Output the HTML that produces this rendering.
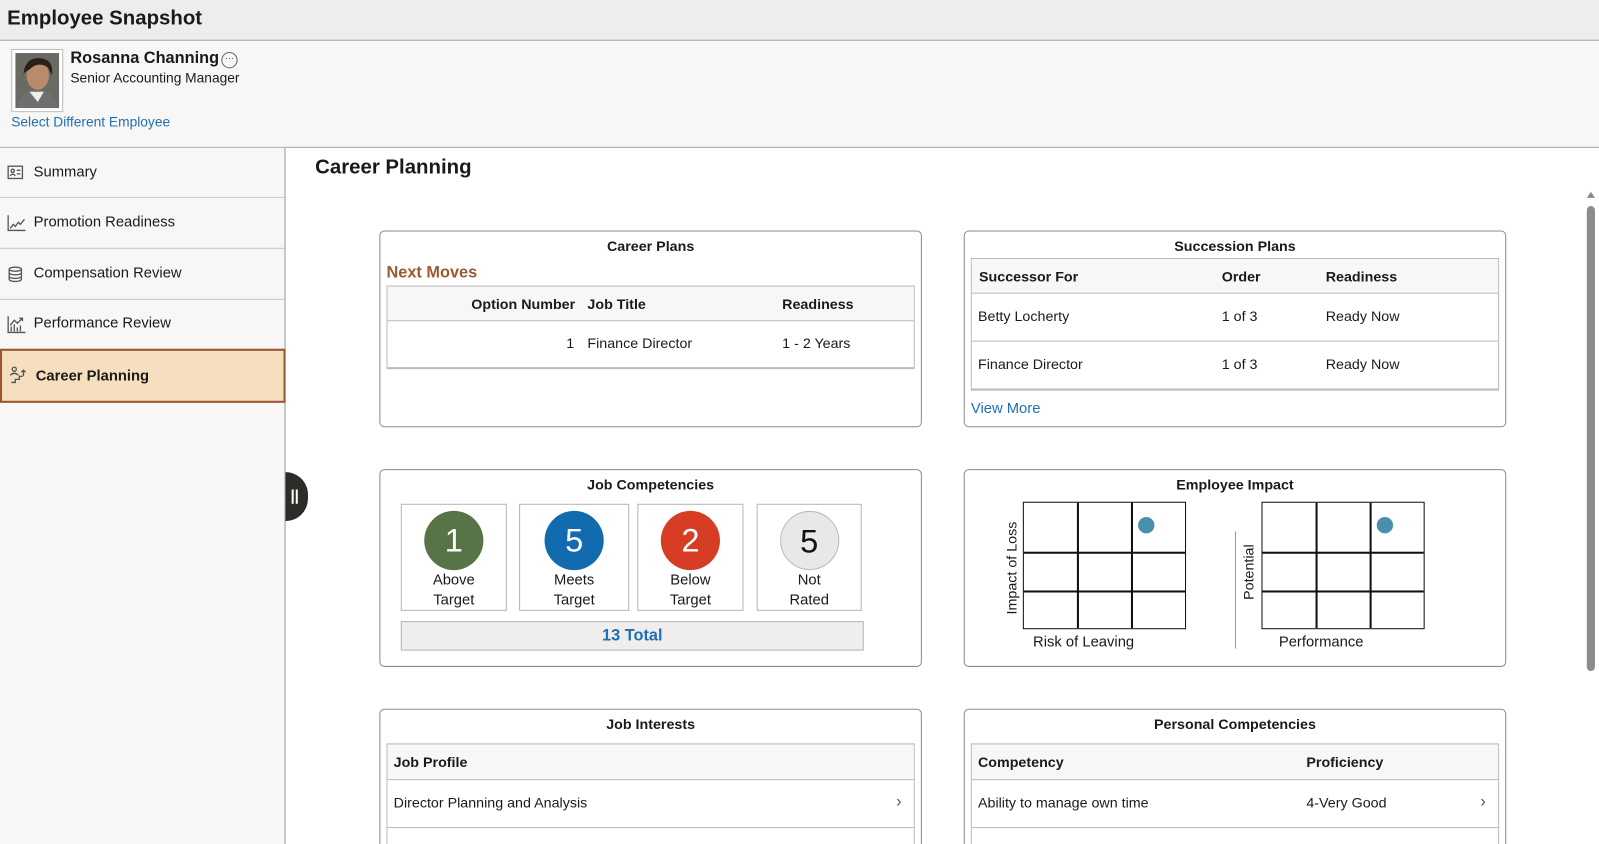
<!DOCTYPE html>
<html><head><meta charset="utf-8"><style>
*{box-sizing:border-box;margin:0;padding:0}
html,body{width:1599px;height:844px;overflow:hidden}
body{font-family:"Liberation Sans",Arial,sans-serif;color:#1a1a1a;background:#fff;position:relative;font-size:14px}
#w{position:absolute;left:0;top:0;width:1568px;height:828px;transform:scale(1.0198);transform-origin:0 0}
.a{position:absolute}
.hdr{left:0;top:0;width:1568px;height:40px;background:#eeedec;border-bottom:1px solid #999}
.prof{left:0;top:40px;width:1568px;height:105px;background:#f8f7f6;border-bottom:1px solid #a8a8a8}
.side{left:0;top:145px;width:280px;height:700px;background:#f8f7f6;border-right:1px solid #999}
.item{position:absolute;left:0;width:279px;height:50px;border-bottom:1px solid #c8c8c8;font-size:14.5px;color:#1a1a1a}
.item span{position:absolute;left:33px;top:16px}
.item svg{position:absolute;left:7px;top:17px}
.card{position:absolute;border:1px solid #8a8a8a;border-radius:5px;background:#fff}
.ct{position:absolute;left:0;right:0;text-align:center;font-weight:bold;font-size:14px;top:6px}
.tbl{position:absolute;border:1px solid #bbb;border-bottom:2px solid #bbb}
.th{position:absolute;left:0;right:0;top:0;background:#f8f7f6;border-bottom:1px solid #bbb;font-weight:bold;font-size:14px}
.row{position:absolute;left:0;right:0;border-bottom:1px solid #bbb;font-size:14px}
.t{position:absolute;white-space:nowrap}
.box{position:absolute;top:33px;height:105px;border:1px solid #b5b5b5;text-align:center;font-size:14.5px;line-height:20px}
.circ{width:58px;height:58px;border-radius:50%;margin:6px auto 0;color:#fff;font-size:32px;line-height:58px}
.grid{position:absolute;width:160px;height:125px;border:1.5px solid #111}
.grid i{position:absolute;background:#111}
.dot{position:absolute;width:16px;height:16px;border-radius:50%;background:#4a8fab}
</style></head><body><div id="w">
<div class="a hdr"><div class="a" style="left:7px;top:7px;font-size:20px;font-weight:bold">Employee Snapshot</div></div>
<div class="a prof">
 <div class="a" style="left:11px;top:8px;width:51px;height:62px;border:1px solid #bbb;background:#fff;padding:3px">
  <svg width="43" height="54" viewBox="0 0 43 54"><rect width="43" height="54" fill="#6b6a62"/><ellipse cx="22" cy="22" rx="11" ry="14" fill="#b98a6c"/><path d="M8 20 Q10 4 24 5 Q38 6 36 22 L32 14 Q22 8 14 16Z" fill="#2a1f1a"/><path d="M2 54 Q4 38 20 36 L24 36 Q40 38 41 54Z" fill="#6f6f6f"/><path d="M14 38 L22 48 L28 38Z" fill="#eee"/></svg>
 </div>
 <div class="a" style="left:69px;top:9px;font-size:16px;font-weight:bold">Rosanna Channing</div>
 <div class="a" style="left:217px;top:11px;width:16px;height:16px;border:1px solid #666;border-radius:50%;font-size:9px;line-height:10px;text-align:center;color:#444">···</div>
 <div class="a" style="left:69px;top:29px;font-size:13.5px">Senior Accounting Manager</div>
 <div class="a" style="left:11px;top:72px;font-size:13.5px;color:#1f6fb6">Select Different Employee</div>
</div>
<div class="a side">
 <div class="item" style="top:0;height:49px"><svg width="16" height="14" viewBox="0 0 16 14" fill="none" stroke="#555" stroke-width="1.3"><rect x="1" y="1" width="14" height="12"/><circle cx="5.5" cy="5.5" r="1.6"/><path d="M3 10.5 Q5.5 7 8 10.5M9.5 5h3.5M9.5 8.5h3.5"/></svg><span>Summary</span></div>
 <div class="item" style="top:49px"><svg width="18" height="16" viewBox="0 0 18 16" fill="none" stroke="#555" stroke-width="1.3"><path d="M1 0v15h17M3 13l3-4 2 2 3-4 2 2 4-5"/></svg><span>Promotion Readiness</span></div>
 <div class="item" style="top:99px"><svg width="16" height="16" viewBox="0 0 16 16" fill="none" stroke="#555" stroke-width="1.3"><ellipse cx="8" cy="3" rx="6" ry="2"/><path d="M2 3v10c0 1 2.7 2 6 2s6-1 6-2V3M2 6.5c0 1 2.7 2 6 2s6-1 6-2M2 10c0 1 2.7 2 6 2s6-1 6-2"/></svg><span>Compensation Review</span></div>
 <div class="item" style="top:148px"><svg width="18" height="17" viewBox="0 0 18 17" fill="none" stroke="#555" stroke-width="1.3"><path d="M1 0v16h17M4 15v-5M7 15v-7M10 15v-4M13 15v-6M3 9l4-5 3 3 5-5M12 2h3v3"/></svg><span>Performance Review</span></div>
 <div class="item" style="top:197px;height:53px;background:#f5dfbf;border:2px solid #9c5533;width:280px"><svg width="18" height="17" viewBox="0 0 18 17" fill="none" stroke="#555" stroke-width="1.3" style="top:15px"><circle cx="5" cy="3" r="2"/><path d="M1 9q4-4 8 0M2 16h4v-3h4v-3h3M14 4v6M12 6l2-2 2 2"/></svg><span style="font-weight:bold;left:33px;top:17px">Career Planning</span></div>
</div>
<div class="a" style="left:280px;top:463px;width:22px;height:48px;background:#2e2c29;border-radius:0 24px 24px 0"><div class="a" style="left:6px;top:17px;width:2px;height:14px;background:#fff"></div><div class="a" style="left:10px;top:17px;width:2px;height:14px;background:#fff"></div></div>
<div class="a" style="left:309px;top:153px;font-size:20px;font-weight:bold">Career Planning</div>
<div class="a" style="left:1556px;top:188px;width:0;height:0;border-left:4px solid transparent;border-right:4px solid transparent;border-bottom:6px solid #888"></div>
<div class="a" style="left:1556px;top:202px;width:8px;height:456px;background:#8c8c8c;border-radius:4px"></div>

<div class="card" style="left:372px;top:226px;width:532px;height:193px">
 <div class="ct">Career Plans</div>
 <div class="a" style="left:6px;top:32px;font-size:16px;font-weight:bold;color:#9c5a32">Next Moves</div>
 <div class="tbl" style="left:6px;top:53px;width:518px;height:82px">
  <div class="th" style="height:34px"><span class="t" style="right:332px;top:9px">Option Number</span><span class="t" style="left:196px;top:9px">Job Title</span><span class="t" style="left:387px;top:9px">Readiness</span></div>
  <div class="row" style="top:34px;height:46px;border:0"><span class="t" style="right:333px;top:13px">1</span><span class="t" style="left:196px;top:13px">Finance Director</span><span class="t" style="left:387px;top:13px">1 - 2 Years</span></div>
 </div>
</div>
<div class="card" style="left:945px;top:226px;width:532px;height:193px">
 <div class="ct">Succession Plans</div>
 <div class="tbl" style="left:6px;top:26px;width:518px;height:130px">
  <div class="th" style="height:34px"><span class="t" style="left:7px;top:9px">Successor For</span><span class="t" style="left:245px;top:9px">Order</span><span class="t" style="left:347px;top:9px">Readiness</span></div>
  <div class="row" style="top:34px;height:47px"><span class="t" style="left:6px;top:14px">Betty Locherty</span><span class="t" style="left:245px;top:14px">1 of 3</span><span class="t" style="left:347px;top:14px">Ready Now</span></div>
  <div class="row" style="top:81px;height:47px;border:0"><span class="t" style="left:6px;top:14px">Finance Director</span><span class="t" style="left:245px;top:14px">1 of 3</span><span class="t" style="left:347px;top:14px">Ready Now</span></div>
 </div>
 <div class="a" style="left:6px;top:166px;font-size:14.5px;color:#1f6fb6">View More</div>
</div>
<div class="card" style="left:372px;top:460px;width:532px;height:194px">
 <div class="ct">Job Competencies</div>
 <div class="box" style="left:20px;width:104px"><div class="circ" style="background:#577447">1</div><div>Above<br>Target</div></div>
 <div class="box" style="left:136px;width:108px"><div class="circ" style="background:#116bae">5</div><div>Meets<br>Target</div></div>
 <div class="box" style="left:252px;width:104px"><div class="circ" style="background:#d73d25">2</div><div>Below<br>Target</div></div>
 <div class="box" style="left:369px;width:103px"><div class="circ" style="background:#e8e8e7;color:#111;border:1px solid #bbb">5</div><div>Not<br>Rated</div></div>
 <div class="a" style="left:20px;top:148px;width:454px;height:29px;background:#efeeed;border:1px solid #b5b5b5;text-align:center;font-weight:bold;font-size:16px;color:#1f6fb6;line-height:27px">13 Total</div>
</div>
<div class="card" style="left:945px;top:460px;width:532px;height:194px">
 <div class="ct">Employee Impact</div>
 <div class="grid" style="left:57px;top:31px"><i style="left:52px;top:0;width:1.5px;height:100%"></i><i style="left:105px;top:0;width:1.5px;height:100%"></i><i style="left:0;top:48px;height:1.5px;width:100%"></i><i style="left:0;top:86px;height:1.5px;width:100%"></i><div class="dot" style="left:112px;top:14px"></div></div>
 <div class="a" style="left:46px;top:96px;transform:translate(-50%,-50%) rotate(-90deg);white-space:nowrap;font-size:14px">Impact of Loss</div>
 <div class="a" style="left:67px;top:161px;font-size:14.5px">Risk of Leaving</div>
 <div class="a" style="left:265px;top:60px;width:1px;height:115px;background:#999"></div>
 <div class="grid" style="left:291px;top:31px"><i style="left:52px;top:0;width:1.5px;height:100%"></i><i style="left:105px;top:0;width:1.5px;height:100%"></i><i style="left:0;top:48px;height:1.5px;width:100%"></i><i style="left:0;top:86px;height:1.5px;width:100%"></i><div class="dot" style="left:112px;top:14px"></div></div>
 <div class="a" style="left:278px;top:100px;transform:translate(-50%,-50%) rotate(-90deg);white-space:nowrap;font-size:14px">Potential</div>
 <div class="a" style="left:308px;top:161px;font-size:14.5px">Performance</div>
</div>
<div class="card" style="left:372px;top:695px;width:532px;height:160px">
 <div class="ct">Job Interests</div>
 <div class="tbl" style="left:6px;top:33px;width:518px;height:130px">
  <div class="th" style="height:35px"><span class="t" style="left:6px;top:9px">Job Profile</span></div>
  <div class="row" style="top:35px;height:47px"><span class="t" style="left:6px;top:14px">Director Planning and Analysis</span><span class="t" style="right:12px;top:13px;font-size:16px;color:#555">›</span></div>
  <div class="row" style="top:82px;height:47px;border:0"><span class="t" style="left:6px;top:14px">Finance Director</span></div>
 </div>
</div>
<div class="card" style="left:945px;top:695px;width:532px;height:160px">
 <div class="ct">Personal Competencies</div>
 <div class="tbl" style="left:6px;top:33px;width:518px;height:130px">
  <div class="th" style="height:35px"><span class="t" style="left:6px;top:9px">Competency</span><span class="t" style="left:328px;top:9px">Proficiency</span></div>
  <div class="row" style="top:35px;height:47px"><span class="t" style="left:6px;top:14px">Ability to manage own time</span><span class="t" style="left:328px;top:14px">4-Very Good</span><span class="t" style="right:12px;top:13px;font-size:16px;color:#555">›</span></div>
  <div class="row" style="top:82px;height:47px;border:0"><span class="t" style="left:6px;top:14px">Business Ranking</span><span class="t" style="left:328px;top:14px">3-Good</span></div>
 </div>
</div>
</div></body></html>
